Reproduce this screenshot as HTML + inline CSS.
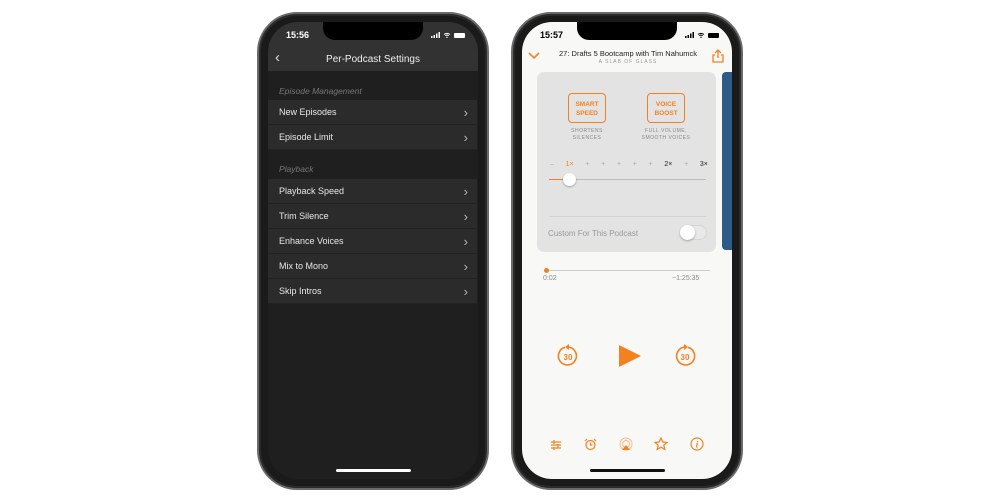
<!DOCTYPE html>
<html><head><style>
*{margin:0;padding:0;box-sizing:border-box}
body{width:1000px;height:500px;background:#fff;position:relative;overflow:hidden;font-family:"Liberation Sans",sans-serif}
.a{position:absolute}
.frame{border-radius:40px;background:#1a1a1a;border:2px solid #6a6a6a;box-shadow:inset 0 0 0 2px #2a2a2a}
.screen{border-radius:30px;overflow:hidden}
.notch{left:50%;margin-left:-50px;top:0;width:100px;height:18px;background:#000;border-radius:0 0 12px 12px}
.row{left:0;width:209px;height:25px;background:#2b2b2b;border-bottom:1px solid #222;color:#e8e8e8;font-size:9px;padding-left:11px;line-height:25px}
.row:after{content:"›";position:absolute;right:9px;top:0;font-size:13px;color:#bbb}
.sec{left:11px;color:#777;font-size:8.5px;font-style:italic}
.o{color:#f48120}
.st{white-space:nowrap;display:flex;align-items:flex-end;gap:3px}
</style></head><body>
<!-- left phone -->
<div class="a frame" style="left:257px;top:12px;width:232px;height:478px"></div>
<div class="a screen" style="left:268px;top:22px;width:210px;height:457px;background:#1f1f1f">
 <div class="a" style="left:0;top:0;width:210px;height:49px;background:#323232"></div>
 <div class="a notch"></div>
 <div class="a" style="left:18px;top:8px;color:#fff;font-size:9px;font-weight:bold">15:56</div>
 <div class="a st" style="left:163px;top:10px">
  <svg width="9" height="6"><rect x="0" y="4" width="1.5" height="2" fill="#fff"/><rect x="2.5" y="3" width="1.5" height="3" fill="#fff"/><rect x="5" y="1.5" width="1.5" height="4.5" fill="#fff"/><rect x="7.5" y="0" width="1.5" height="6" fill="#fff"/></svg>
  <svg width="8" height="6"><path d="M1 2.5a4.5 4.5 0 0 1 6 0M2.3 3.8a2.6 2.6 0 0 1 3.4 0" stroke="#fff" stroke-width="1" fill="none"/><circle cx="4" cy="5.3" r=".7" fill="#fff"/></svg>
  <span style="display:inline-block;width:11px;height:5px;background:#fff;border-radius:1px"></span></div>
 <div class="a" style="left:7px;top:27px;color:#ddd;font-size:15px">‹</div>
 <div class="a" style="left:0;width:210px;top:32px;text-align:center;color:#eee;font-size:10px">Per-Podcast Settings</div>
 <div class="a sec" style="top:64px">Episode Management</div>
 <div class="a row" style="top:78px">New Episodes</div>
 <div class="a row" style="top:103px">Episode Limit</div>
 <div class="a sec" style="top:142px">Playback</div>
 <div class="a row" style="top:157px">Playback Speed</div>
 <div class="a row" style="top:182px">Trim Silence</div>
 <div class="a row" style="top:207px">Enhance Voices</div>
 <div class="a row" style="top:232px">Mix to Mono</div>
 <div class="a row" style="top:257px">Skip Intros</div>
 <div class="a" style="left:68px;top:447px;width:75px;height:3px;background:#fff;border-radius:2px"></div>
</div>
<!-- right phone -->
<div class="a frame" style="left:511px;top:12px;width:232px;height:478px"></div>
<div class="a screen" style="left:522px;top:22px;width:210px;height:457px;background:#f8f8f6">
 <div class="a notch"></div>
 <div class="a" style="left:18px;top:8px;color:#000;font-size:9px;font-weight:bold">15:57</div>
 <div class="a st" style="left:163px;top:10px">
  <svg width="9" height="6"><rect x="0" y="4" width="1.5" height="2" fill="#000"/><rect x="2.5" y="3" width="1.5" height="3" fill="#000"/><rect x="5" y="1.5" width="1.5" height="4.5" fill="#000"/><rect x="7.5" y="0" width="1.5" height="6" fill="#000"/></svg>
  <svg width="8" height="6"><path d="M1 2.5a4.5 4.5 0 0 1 6 0M2.3 3.8a2.6 2.6 0 0 1 3.4 0" stroke="#000" stroke-width="1" fill="none"/><circle cx="4" cy="5.3" r=".7" fill="#000"/></svg>
  <span style="display:inline-block;width:11px;height:5px;background:#000;border-radius:1px"></span></div>
 <svg class="a" style="left:6px;top:30px" width="12" height="8"><path d="M1 1l5 5 5-5" stroke="#f48120" stroke-width="1.6" fill="none"/></svg>
 <div class="a" style="left:20px;width:172px;top:27px;text-align:center;font-size:7.5px;color:#222">27: Drafts 5 Bootcamp with Tim Nahumck</div>
 <div class="a" style="left:20px;width:172px;top:37px;text-align:center;font-size:5px;color:#999;letter-spacing:1px">A SLAB OF GLASS</div>
 <svg class="a" style="left:190px;top:27px" width="12" height="14"><path d="M6 1v8M3 4l3-3 3 3M3 6H1v7h10V6H9" stroke="#f48120" stroke-width="1.3" fill="none"/></svg>
 <div class="a" style="left:15px;top:50px;width:179px;height:180px;background:#e3e3e3;border-radius:7px">
  <div class="a o" style="left:31px;top:21px;width:38px;height:30px;border:1.3px solid #f48120;border-radius:4px;font-size:6.5px;font-weight:bold;text-align:center;padding-top:6px;line-height:9px">SMART<br>SPEED</div>
  <div class="a o" style="left:110px;top:21px;width:38px;height:30px;border:1.3px solid #f48120;border-radius:4px;font-size:6.5px;font-weight:bold;text-align:center;padding-top:6px;line-height:9px">VOICE<br>BOOST</div>
  <div class="a" style="left:20px;width:60px;top:56px;text-align:center;font-size:5px;color:#888;line-height:7px;letter-spacing:.5px">SHORTENS<br>SILENCES</div>
  <div class="a" style="left:99px;width:60px;top:56px;text-align:center;font-size:5px;color:#888;line-height:7px;letter-spacing:.5px">FULL VOLUME,<br>SMOOTH VOICES</div>
  <div class="a" style="left:13px;top:89px;width:158px;font-size:7px;color:#aaa;display:flex;justify-content:space-between"><span>–</span><span class="o">1×</span><span>+</span><span>+</span><span>+</span><span>+</span><span>+</span><span style="color:#222">2×</span><span>+</span><span style="color:#222">3×</span></div>
  <div class="a" style="left:12px;top:107px;width:157px;height:1px;background:#bbb"></div>
  <div class="a" style="left:12px;top:107px;width:20px;height:1px;background:#f48120"></div>
  <div class="a" style="left:26px;top:101px;width:13px;height:13px;border-radius:50%;background:#fff;box-shadow:0 1px 2px rgba(0,0,0,.3)"></div>
  <div class="a" style="left:12px;top:144px;width:157px;height:1px;background:#d3d3d3"></div>
  <div class="a" style="left:11px;top:157px;font-size:8px;color:#999">Custom For This Podcast</div>
  <div class="a" style="left:143px;top:153px;width:27px;height:15px;border-radius:8px;background:#e8e8e8;border:1px solid #d5d5d5"></div>
  <div class="a" style="left:143px;top:153px;width:15px;height:15px;border-radius:50%;background:#fff;box-shadow:0 1px 2px rgba(0,0,0,.3)"></div>
 </div>
 <div class="a" style="left:200px;top:50px;width:12px;height:178px;background:#2b5b86;border-radius:4px 0 0 4px"></div>
 <div class="a" style="left:24px;top:248px;width:164px;height:1px;background:#ccc"></div>
 <div class="a" style="left:22px;top:246px;width:5px;height:5px;border-radius:50%;background:#f48120"></div>
 <div class="a" style="left:21px;top:253px;font-size:7px;color:#888">0:02</div>
 <div class="a" style="left:150px;top:253px;font-size:7px;color:#888">−1:25:35</div>
 <svg class="a" style="left:34px;top:322px" width="24" height="24"><path d="M9 3.3A9 9 0 1 0 12 3" stroke="#f48120" stroke-width="1.6" fill="none"/><path d="M13 0l-4 3 4 3z" fill="#f48120"/><text x="12" y="16" font-size="8" font-weight="bold" fill="#f48120" text-anchor="middle" font-family="Liberation Sans">30</text></svg>
 <svg class="a" style="left:95px;top:322px" width="25" height="24"><path d="M2 1l22 11-22 11z" fill="#f48120"/></svg>
 <svg class="a" style="left:151px;top:322px" width="24" height="24"><path d="M15 3.3A9 9 0 1 1 12 3" stroke="#f48120" stroke-width="1.6" fill="none"/><path d="M11 0l4 3-4 3z" fill="#f48120"/><text x="12" y="16" font-size="8" font-weight="bold" fill="#f48120" text-anchor="middle" font-family="Liberation Sans">30</text></svg>
 <svg class="a" style="left:28px;top:417px" width="12" height="12"><path d="M1 3h10M1 6h10M1 9h10M4 1v4M8 5v4M4 8v3" stroke="#f48120" stroke-width="1.2" fill="none"/></svg>
 <svg class="a" style="left:62px;top:416px" width="13" height="13"><circle cx="6.5" cy="7" r="4.5" stroke="#f48120" stroke-width="1.2" fill="none"/><path d="M6.5 4.5V7h2M1 3l2-2M12 3l-2-2" stroke="#f48120" stroke-width="1.2" fill="none"/></svg>
 <svg class="a" style="left:97px;top:415px" width="14" height="14"><circle cx="7" cy="7" r="6" stroke="#f9b987" fill="none"/><circle cx="7" cy="7" r="3.5" stroke="#f9b987" fill="none"/><path d="M3 13l4-5 4 5z" fill="#f48120"/></svg>
 <svg class="a" style="left:132px;top:415px" width="14" height="14"><path d="M7 1l1.8 4 4.2.4-3.2 2.8 1 4.2L7 10.2 3.2 12.4l1-4.2L1 5.4l4.2-.4z" stroke="#f48120" stroke-width="1.2" fill="none"/></svg>
 <svg class="a" style="left:168px;top:415px" width="14" height="14"><circle cx="7" cy="7" r="6" stroke="#f48120" stroke-width="1.2" fill="none"/><text x="7" y="10.5" font-size="9" font-style="italic" font-weight="bold" fill="#f48120" text-anchor="middle" font-family="Liberation Serif">i</text></svg>
 <div class="a" style="left:68px;top:447px;width:75px;height:3px;background:#111;border-radius:2px"></div>
</div>
</body></html>
